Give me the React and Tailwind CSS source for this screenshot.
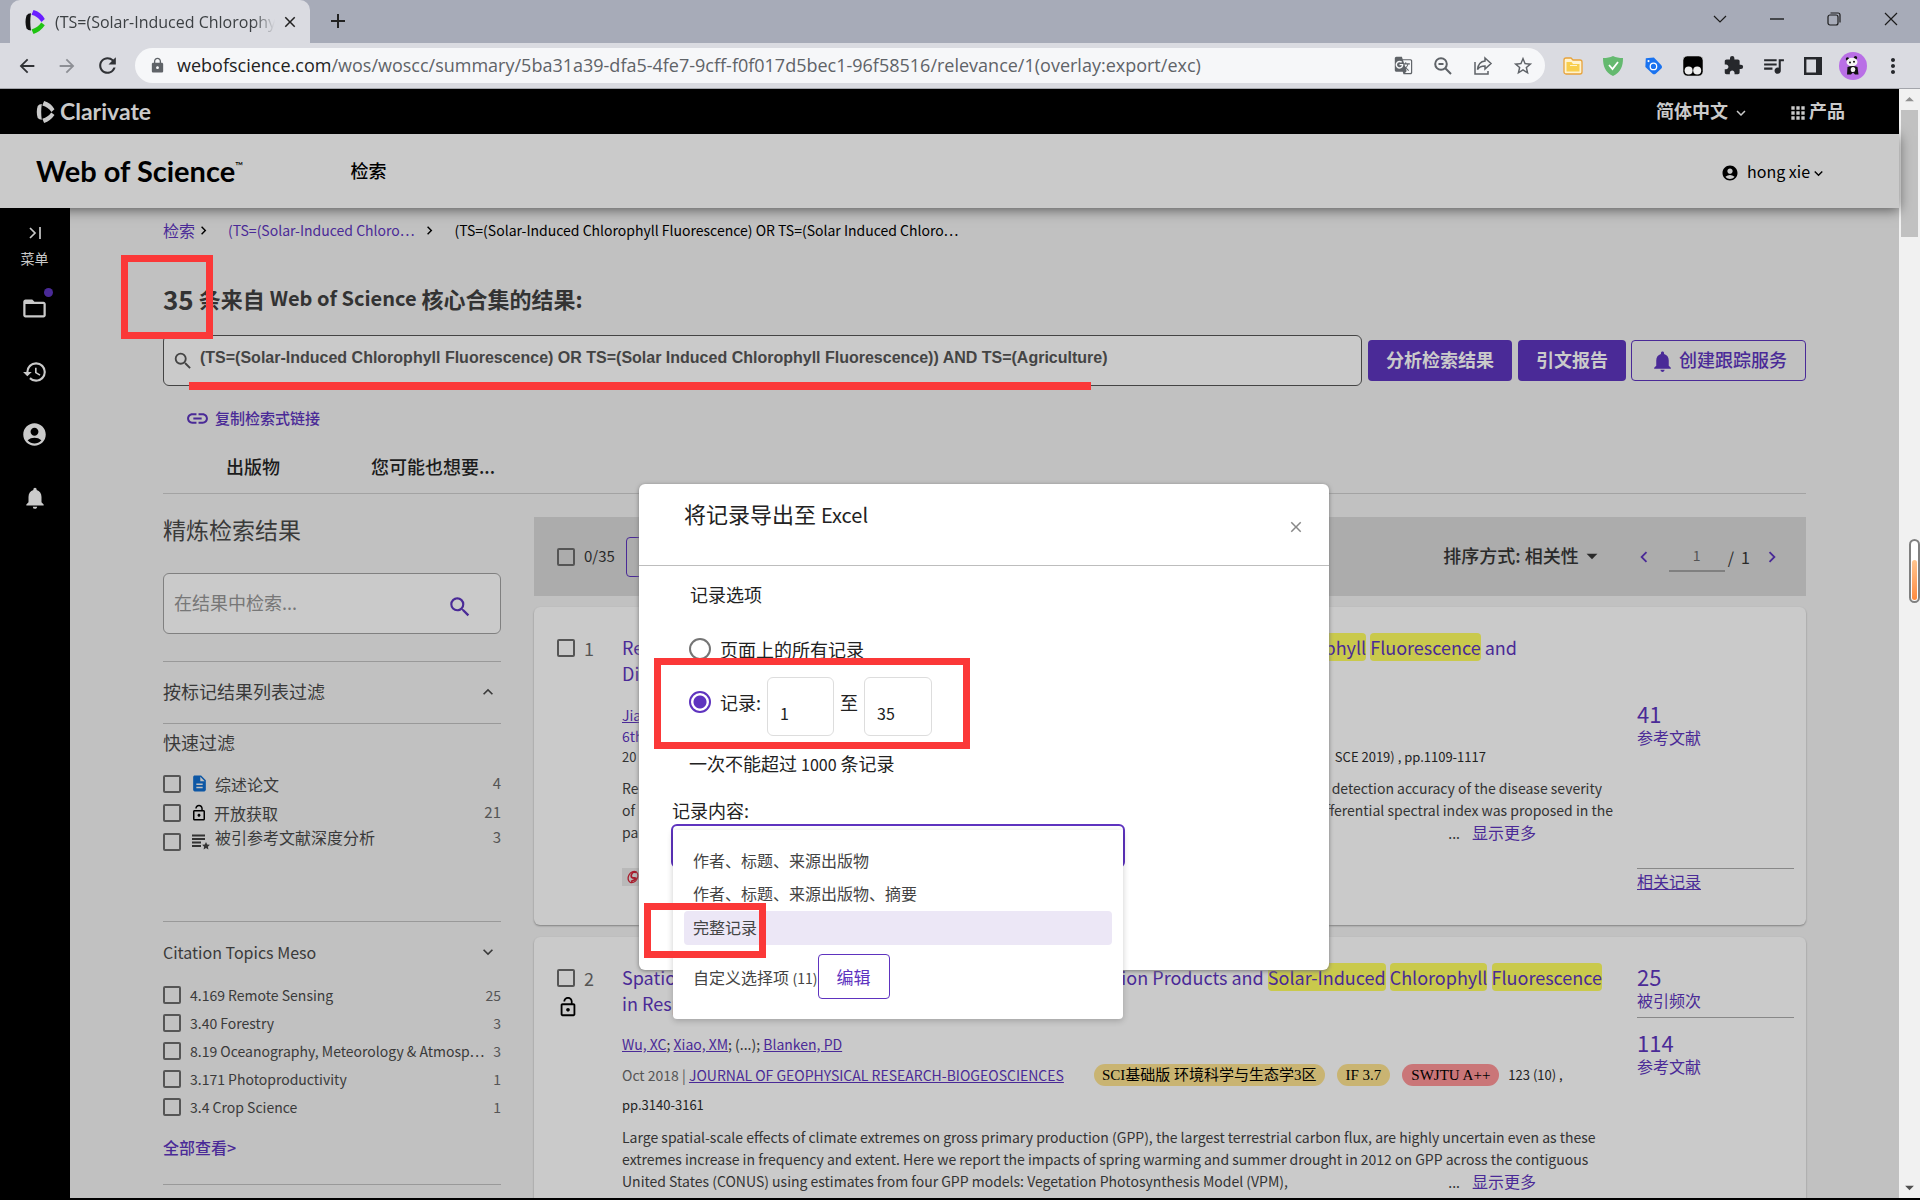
import React from "react";
import {
  MdLock, MdFolderOpen, MdHistory, MdAccountCircle, MdNotifications, MdLink, MdSearch,
  MdLockOpen, MdDescription, MdGTranslate, MdStarBorder, MdExtension, MdQueueMusic,
  MdArrowBack, MdArrowForward, MdRefresh, MdClose, MdAdd, MdMoreVert, MdApps,
  MdKeyboardArrowDown, MdKeyboardArrowUp, MdKeyboardArrowRight, MdKeyboardArrowLeft,
  MdArrowDropDown, MdArrowDropUp,
} from "react-icons/md";

const ring = "appearance-none shrink-0 w-[18px] h-[18px] border-2 border-[#555] rounded-xs";

function Mark({ a, b, c, className }) {
  return (
    <svg viewBox="0 0 20 24" className={className} aria-hidden="true">
      <path d="M1.500 5.500 Q3 3.200 6 3.200 Q4.600 12 6 20.500 Q3 20.500 1.500 18.500 Q-0.500 12 1.500 5.500Z" fill={a} />
      <path d="M8.500 0 Q16 2 19.800 9 L16.500 12 Q13 6.500 6.500 4.800Z" fill={b} />
      <path d="M16.300 12.600 L19.800 15.200 Q15.500 21.500 8.500 24 L6.500 19.400 Q13 17.500 16.300 12.600Z" fill={c} />
    </svg>
  );
}

function IconBtn({ label, children, className = "" }) {
  return (
    <button type="button" aria-label={label} className={`flex items-center justify-center shrink-0 ${className}`}>
      {children}
    </button>
  );
}

function Browser() {
  return (
    <header className="shrink-0 font-['Open_Sans','Noto_Sans',sans-serif]">
      <div className="flex h-[43px] items-stretch bg-[#a7abb8] pl-[10px]">
        <div className="flex w-[300px] items-center rounded-t-[10px] bg-[#dadbe1] pl-[15px] pr-[5px]">
          <Mark a="#111" b="#6a1fff" c="#1fc412" className="h-6 w-5 shrink-0" />
          <div className="ml-[10px] flex-1 overflow-hidden whitespace-nowrap text-[16px] text-[#3c4043] [mask-image:linear-gradient(to_right,black_90%,transparent)]">
            (TS=(Solar-Induced Chlorophy
          </div>
          <IconBtn label="Close tab" className="w-[30px]"><MdClose className="text-[18px] text-[#222]" /></IconBtn>
        </div>
        <IconBtn label="New tab" className="w-[55px] pb-px"><MdAdd className="text-[24px] text-[#222]" /></IconBtn>
        <div className="ml-auto flex items-center pb-[5px] text-[#1c1c1c]">
          <IconBtn label="Search tabs" className="w-[57px]">
            <svg viewBox="0 0 14 8" className="h-2 w-[14px]" fill="none" stroke="currentColor" strokeWidth="1.2"><path d="M1 1l6 6 6-6" /></svg>
          </IconBtn>
          <IconBtn label="Minimize" className="w-[57px]"><svg viewBox="0 0 14 2" className="h-[2px] w-[14px]"><path d="M0 1h14" stroke="currentColor" strokeWidth="1.4" /></svg></IconBtn>
          <IconBtn label="Restore" className="w-[57px]">
            <svg viewBox="0 0 14 14" className="h-[14px] w-[14px]" fill="none" stroke="currentColor" strokeWidth="1.2"><rect x="1" y="3" width="10" height="10" rx="2" /><path d="M3.500 1H11a2 2 0 0 1 2 2v7.500" /></svg>
          </IconBtn>
          <IconBtn label="Close" className="w-[58px]"><svg viewBox="0 0 14 14" className="h-[14px] w-[14px]" fill="none" stroke="currentColor" strokeWidth="1.2"><path d="M1 1l12 12M13 1L1 13" /></svg></IconBtn>
        </div>
      </div>
      <div className="flex h-[46px] items-center border-b border-[#a3a5ab] bg-[#dadbe1] pl-[7px] text-[#303236]">
        <IconBtn label="Back" className="w-10"><MdArrowBack className="text-[22px]" /></IconBtn>
        <IconBtn label="Forward" className="w-10"><MdArrowForward className="text-[22px] text-[#8d8f95]" /></IconBtn>
        <IconBtn label="Reload" className="w-10"><MdRefresh className="text-[25px]" /></IconBtn>
        <div className="ml-2 flex h-[35px] flex-1 items-center rounded-full bg-[#f6f7f9] pl-[14px] pr-[2px] text-[#5f6368]">
          <MdLock className="text-[17px]" />
          <div className="ml-[11px] flex-1 whitespace-nowrap text-[18px]">
            <span className="text-[#222]">webofscience.com</span>/wos/woscc/summary/5ba31a39-dfa5-4fe7-9cff-f0f017d5bec1-96f58516/relevance/1(overlay:export/exc)
          </div>
          <IconBtn label="Translate" className="w-10"><MdGTranslate className="text-[19px]" /></IconBtn>
          <IconBtn label="Zoom" className="w-10">
            <svg viewBox="0 0 20 20" className="h-5 w-5" fill="none" stroke="currentColor" strokeWidth="2"><circle cx="8" cy="8" r="5.800" /><path d="M12.300 12.300L18 18M5.500 8h5" /></svg>
          </IconBtn>
          <IconBtn label="Share" className="w-10">
            <svg viewBox="0 0 20 20" className="h-5 w-5" fill="none" stroke="currentColor" strokeWidth="1.500"><path d="M2 6v12h13v-3M12 2l6 5.500-6 5.500V10c-4 0-6 1-7.500 3.500C5 9 7.500 5.500 12 5z" /></svg>
          </IconBtn>
          <IconBtn label="Bookmark" className="w-10"><MdStarBorder className="text-[22px]" /></IconBtn>
        </div>
        <div className="ml-2 flex items-center pr-[7px] text-[#26282c]">
          <IconBtn label="Folder" className="w-10">
            <svg viewBox="0 0 20 18" className="h-[18px] w-5"><path d="M1 3a2 2 0 0 1 2-2h5l2 2h7a2 2 0 0 1 2 2v10a2 2 0 0 1-2 2H3a2 2 0 0 1-2-2z" fill="#fff3cf" stroke="#e8a33a" strokeWidth="1.300" /><path d="M3.500 5h5l1.500 2h6.500v7.500h-13z" fill="#f8ce4c" /><path d="M7 8.500h7" stroke="#fff3cf" /></svg>
          </IconBtn>
          <IconBtn label="Shield" className="w-10">
            <svg viewBox="0 0 20 20" className="h-5 w-5"><path d="M10 0c3 1.500 6 2 10 2 0 8-2 14-10 18C2 16 0 10 0 2c4 0 7-.5 10-2z" fill="#64b96f" /><path d="M6 9l3.500 4L15 6" fill="none" stroke="#fff" strokeWidth="1.800" /></svg>
          </IconBtn>
          <IconBtn label="Tag" className="w-10">
            <svg viewBox="0 0 20 20" className="h-[18px] w-[18px]"><path d="M2 1.500l9-1 8 8.500q2 2 0 4l-6 5.500q-2 1.500-3.500 0L1.500 11z" fill="#1a73f0" /><circle cx="10.500" cy="10.500" r="3.600" fill="none" stroke="#fff" strokeWidth="1.400" /><circle cx="5" cy="4.500" r="1.200" fill="#fff" /></svg>
          </IconBtn>
          <IconBtn label="Scripts" className="w-10">
            <svg viewBox="0 0 20 20" className="h-5 w-5"><rect width="20" height="20" rx="4.500" fill="#000" stroke="#eee" strokeWidth=".5" /><circle cx="5.600" cy="14.600" r="4" fill="#eee" /><circle cx="14.200" cy="14.600" r="4" fill="#eee" /></svg>
          </IconBtn>
          <IconBtn label="Extensions" className="w-10"><MdExtension className="text-[21px]" /></IconBtn>
          <IconBtn label="Media" className="w-10"><MdQueueMusic className="text-[25px]" /></IconBtn>
          <IconBtn label="Side panel" className="w-10">
            <svg viewBox="0 0 18 18" className="h-[18px] w-[18px]"><path d="M1.200 1.200h15.600v15.600H1.200z" fill="none" stroke="currentColor" strokeWidth="2.400" /><path d="M12 0h6v18h-6z" fill="currentColor" /></svg>
          </IconBtn>
          <IconBtn label="Profile" className="w-10">
            <svg viewBox="0 0 28 28" className="h-7 w-7"><circle cx="14" cy="14" r="14" fill="#b96fe6" /><circle cx="8.500" cy="7" r="1.700" fill="#111" /><circle cx="16.500" cy="5.800" r="1.700" fill="#111" /><ellipse cx="13" cy="10" rx="5.500" ry="4.300" fill="#f4f4f4" /><circle cx="11" cy="10.500" r="1" fill="#111" /><circle cx="15" cy="9.800" r="1" fill="#111" /><path d="M8.500 15q5.500-2 10 0l1 7.500h-3.500l-2-2-2 2H8z" fill="#111" /><ellipse cx="14" cy="17.500" rx="2.300" ry="2.600" fill="#f4f4f4" /></svg>
          </IconBtn>
          <IconBtn label="More" className="w-10"><MdMoreVert className="text-[24px]" /></IconBtn>
        </div>
      </div>
    </header>
  );
}

function Hl({ children }) {
  return <mark className="rounded-[4px] bg-[#c9c94c] py-px text-inherit">{children}</mark>;
}

const topics = [
  ["4.169 Remote Sensing", 25],
  ["3.40 Forestry", 3],
  ["8.19 Oceanography, Meteorology & Atmosp…", 3],
  ["3.171 Photoproductivity", 1],
  ["3.4 Crop Science", 1],
];

function Filters() {
  return (
    <aside className="w-[338px] shrink-0 text-[#3a3a3a]">
      <h2 className="flex h-[79px] items-center pb-2 text-[23px]">精炼检索结果</h2>
      <div className="flex h-[61px] items-center rounded-md border border-[#808080] bg-[#cacaca] pl-[10px] pr-[27px]">
        <input aria-label="在结果中检索" placeholder="在结果中检索..." className="w-full flex-1 bg-transparent pb-0.5 text-[18px] outline-none placeholder:text-[#777]" />
        <IconBtn label="检索"><MdSearch className="mt-1.5 text-[26px] text-[#4a2a97]" /></IconBtn>
      </div>
      <div className="mt-[27px] flex h-[62px] items-center justify-between border-t border-[#999] pb-0.5 pr-[3px] text-[18px]">
        按标记结果列表过滤<MdKeyboardArrowUp className="text-[20px]" />
      </div>
      <h3 className="flex h-[46px] items-center border-t border-[#999] pb-[9px] text-[18px]">快速过滤</h3>
      <ul className="text-[16px]">
        <li><label className="flex h-[29px] items-center"><input type="checkbox" className={ring} /><MdDescription className="ml-[9px] mr-[6px] text-[19px] text-[#0d57a5]" />综述论文<span className="ml-auto text-[15px] text-[#555]">4</span></label></li>
        <li><label className="flex h-[29px] items-center"><input type="checkbox" className={ring} /><MdLockOpen className="ml-[9px] mr-[6px] text-[18px] text-black" />开放获取<span className="ml-auto text-[15px] text-[#555]">21</span></label></li>
        <li><label className="flex h-[30px] items-center"><input type="checkbox" className={ring} />
          <svg viewBox="0 0 18 16" className="ml-[11px] mr-[5px] h-4 w-[18px]" fill="none" stroke="#333" strokeWidth="1.800"><path d="M0 1.500h13M0 5h13M0 8.500h9M0 12h9" /><path d="M14 8l1.200 2.500 2.700.3-2 1.900.5 2.700-2.400-1.300-2.400 1.300.5-2.700-2-1.900 2.700-.3z" fill="#333" stroke="none" /></svg>
          <span className="self-start leading-5">被引参考文献深度分析</span><span className="ml-auto self-start text-[15px] leading-5 text-[#555]">3</span></label></li>
      </ul>
      <div className="mt-16 flex h-[60px] items-center justify-between border-t border-[#999] pr-[3px] text-[16px]">
        Citation Topics Meso<MdKeyboardArrowDown className="text-[20px]" />
      </div>
      <ul className="text-[14px]">
        {topics.map(([t, n]) => (
          <li key={t}>
            <label className="flex h-[28px] items-center">
              <input type="checkbox" className={ring} />
              <span className="ml-[9px] flex-1 whitespace-nowrap">{t}</span>
              <span className="ml-1 text-[#555]">{n}</span>
            </label>
          </li>
        ))}
      </ul>
      <div className="flex h-[64px] items-center border-b border-[#999] pb-3">
        <a href="#all" className="text-[16px] font-medium text-[#4a2a97]">全部查看&gt;</a>
      </div>
    </aside>
  );
}

function Results() {
  return (
    <div className="min-w-0 flex-1 pt-[23px]">
      <div className="flex h-[79px] items-center bg-[#acacac] pl-[23px] pr-[23px] text-[15px] text-[#2a2a2a]">
        <input type="checkbox" id="all" className={ring} />
        <label htmlFor="all" className="ml-[9px]">0/35</label>
        <button type="button" aria-label="添加到标记结果列表" className="ml-[11px] h-10 w-[180px] rounded-[4px] border border-[#4a2a97]" />
        <button type="button" className="ml-auto flex items-center pb-0.5 text-[18px] font-medium">
          排序方式: 相关性<MdArrowDropDown className="text-[26px]" />
        </button>
        <IconBtn label="上一页" className="ml-7"><MdKeyboardArrowLeft className="text-[22px] text-[#4a2a97]" /></IconBtn>
        <input aria-label="页码" defaultValue="1" className="ml-[14px] mr-[3px] w-14 border-b-2 border-[#808080] bg-transparent py-1 text-center text-[14px] text-[#555]" />
        <span className="text-[16px] whitespace-pre">/  1</span>
        <IconBtn label="下一页" className="ml-[11px]"><MdKeyboardArrowRight className="text-[22px] text-[#4a2a97]" /></IconBtn>
      </div>

      <article className="mt-[11px] flex h-[318px] rounded-md bg-[#cacaca] pl-[23px] pr-3 shadow-[0_1px_2px_#808080]">
        <label className="flex w-[65px] items-center self-start pt-[29px] text-[18px] leading-6 text-[#555]">
          <input type="checkbox" className={`${ring} mr-[9px]`} />1
        </label>
        <div className="w-[991px] pt-[27px] text-[14px] text-[#333]">
          <h3 className="text-[18px] leading-[26px] text-[#4a2a97]">
            <div className="flex w-[895px] justify-between"><span>Re</span><span><Hl>Chlorophyll</Hl> <Hl>Fluorescence</Hl> and</span></div>
            <div>Di</div>
          </h3>
          <div className="mt-[18px] leading-[22px]"><a href="#a" className="text-[#4a2a97] underline">Jia</a></div>
          <div className="leading-[20px] text-[#4a2a97]">6th</div>
          <div className="flex w-[864px] justify-between text-[13px] leading-[22px]"><span>20</span><span className="text-[#222]">SCE 2019) , pp.1109-1117</span></div>
          <div className="mt-[9px] leading-[22px]">
            <div className="flex w-[980px] justify-between"><span>Re</span><span>detection accuracy of the disease severity</span></div>
            <div className="flex justify-between"><span>of</span><span>differential spectral index was proposed in the</span></div>
            <div className="flex w-[914px] justify-between"><span>pa</span><span>...<a href="#m" className="ml-3 text-[16px] text-[#4a2a97]">显示更多</a></span></div>
          </div>
          <div className="mt-6 h-[18px] w-5 bg-[#b9b9b9] pl-1 pt-0.5">
            <svg viewBox="0 0 14 14" className="h-[14px] w-[14px]" fill="none" stroke="#a81c2c" strokeWidth="1.800"><path d="M10.500 2.500Q7 1 5.500 4.500T8.500 8 5 11.500" /><ellipse cx="7" cy="7" rx="4.500" ry="6" transform="rotate(30 7 7)" strokeWidth="1.300" /></svg>
          </div>
        </div>
        <div className="ml-auto w-[157px] pt-[92px] text-[#4a2a97]">
          <a href="#r" className="block text-[22px] leading-[28px]">41</a>
          <a href="#r" className="block text-[16px] leading-5">参考文献</a>
          <a href="#s" className="mt-[121px] block border-t border-[#888] pt-0.5 text-[16px] leading-5 underline">相关记录</a>
        </div>
      </article>

      <article className="mt-3 flex h-[318px] rounded-md bg-[#cacaca] pl-[23px] pr-3 shadow-[0_1px_2px_#808080]">
        <div className="w-[65px] pt-[29px]">
          <label className="flex items-center text-[18px] leading-6 text-[#555]"><input type="checkbox" className={`${ring} mr-[9px]`} />2</label>
          <MdLockOpen className="mt-[6px] text-[22px] text-black" />
        </div>
        <div className="w-[991px] pt-[27px] text-[14px] text-[#333]">
          <h3 className="text-[18px] leading-[26px] text-[#4a2a97]">
            <div className="flex w-[980px] justify-between whitespace-nowrap"><span>Spatiotemporal</span><span>Production Products and <Hl>Solar-Induced</Hl> <Hl>Chlorophyll</Hl> <Hl>Fluorescence</Hl></span></div>
            <div>in Response</div>
          </h3>
          <div className="mt-[17px] leading-[22px]">
            <a href="#a" className="text-[#4a2a97] underline">Wu, XC</a>; <a href="#a" className="text-[#4a2a97] underline">Xiao, XM</a>; (...); <a href="#a" className="text-[#4a2a97] underline">Blanken, PD</a>
          </div>
          <div className="mt-2 flex items-center leading-[24px] text-[#555]">
            <span className="whitespace-pre">Oct 2018 | </span><a href="#j" className="text-[#4a2a97] underline">JOURNAL OF GEOPHYSICAL RESEARCH-BIOGEOSCIENCES</a>
            <div className="ml-[30px] flex gap-3 font-['Liberation_Serif','Noto_Sans_CJK_SC',serif] text-[15px] leading-[22px] text-black">
              <span className="rounded-full bg-[#c9b472] px-[8px]">SCI基础版 环境科学与生态学3区</span>
              <span className="rounded-full bg-[#c9b472] px-[9px]">IF 3.7</span>
              <span className="rounded-full bg-[#ca7678] px-[9px]">SWJTU A++</span>
            </div>
            <span className="ml-[9px] text-[13px] text-[#222]">123 (10) ,</span>
          </div>
          <div className="mt-[7px] text-[13px] leading-[22px] text-[#222]">pp.3140-3161</div>
          <div className="mt-[10px] whitespace-nowrap leading-[22px]">
            <div>Large spatial-scale effects of climate extremes on gross primary production (GPP), the largest terrestrial carbon flux, are highly uncertain even as these</div>
            <div>extremes increase in frequency and extent. Here we report the impacts of spring warming and summer drought in 2012 on GPP across the contiguous</div>
            <div className="flex w-[914px] justify-between"><span>United States (CONUS) using estimates from four GPP models: Vegetation Photosynthesis Model (VPM),</span><span>...<a href="#m" className="ml-3 text-[16px] text-[#4a2a97]">显示更多</a></span></div>
          </div>
        </div>
        <div className="ml-auto w-[157px] pt-[25px] text-[#4a2a97]">
          <a href="#c" className="block text-[22px] leading-[28px]">25</a>
          <a href="#c" className="block text-[16px] leading-5">被引频次</a>
          <a href="#r" className="mt-[7px] block border-t border-[#888] pt-[10px] text-[22px] leading-[28px]">114</a>
          <a href="#r" className="block text-[16px] leading-5">参考文献</a>
        </div>
      </article>
    </div>
  );
}

function Dialog() {
  const radio = "appearance-none w-[22px] h-[22px] rounded-full border-2 shrink-0";
  return (
    <div role="dialog" aria-label="将记录导出至 Excel" className="absolute left-[639px] top-[395px] h-[486px] w-[690px] rounded-md bg-white text-[18px] text-[#222] shadow-[0_1px_4px_#777]">
      <div className="flex h-[82px] items-center justify-between border-b border-[#bdbdbd] pl-[45px] pr-6">
        <h2 className="pb-[22px] text-[22px]">将记录导出至 <span className="text-[20px]">Excel</span></h2>
        <IconBtn label="关闭" className="pt-1"><MdClose className="text-[18px] text-[#888]" /></IconBtn>
      </div>
      <div className="pl-[50px] pt-[14px]">
        <div className="pl-px leading-[28px]">记录选项</div>
        <label className="mt-6 flex h-[34px] items-center gap-[9px]"><input type="radio" name="range" className={`${radio} border-[#757575]`} />页面上的所有记录</label>
        <div className="mt-[10px] flex h-[60px] items-center">
          <div className="flex items-center pb-2">
            <input id="rng" type="radio" name="range" defaultChecked className={`${radio} border-[#5e33bf] bg-[radial-gradient(circle,#5e33bf_6px,transparent_7px)] bg-center`} />
            <label htmlFor="rng" className="ml-[9px]">记录:</label>
          </div>
          <input aria-label="起始记录" defaultValue="1" className="ml-[6px] h-[59px] w-[67px] rounded-md border border-[#ddd] pl-[12px] pt-[13px] text-[16px]" />
          <span className="mx-[6px] pb-2">至</span>
          <input aria-label="结束记录" defaultValue="35" className="h-[59px] w-[68px] rounded-md border border-[#ddd] pl-[12px] pt-[13px] text-[16px]" />
        </div>
        <div className="mt-[13px] leading-[28px]">一次不能超过 <span className="text-[16px]">1000</span> 条记录</div>
      </div>
      <div className="relative pl-[32px] pt-[18px]">
        <div className="pl-px leading-[28px]">记录内容:</div>
        <button type="button" aria-label="记录内容" className="block h-11 w-[454px] rounded-md border-2 border-[#5e33bf]" />
        <div role="listbox" aria-label="记录内容选项" className="absolute left-[34px] top-[52px] h-[189px] w-[450px] rounded-b-[4px] bg-white px-[11px] pt-[14px] text-[16px] text-[#444] shadow-[0_2px_6px_#0003]">
          <div role="option" className="flex h-[33px] items-center pb-0.5 pl-[9px]">作者、标题、来源出版物</div>
          <div role="option" className="flex h-[34px] items-center pb-0.5 pl-[9px]">作者、标题、来源出版物、摘要</div>
          <div role="option" aria-selected="true" className="flex h-[34px] items-center rounded-[4px] bg-[#ece7f6] pb-0.5 pl-[9px]">完整记录</div>
          <div className="mt-[9px] flex h-[45px] items-center pl-[9px]">
            <span>自定义选择项 <span className="text-[14px]">(11)</span></span>
            <button type="button" className="h-[45px] w-[72px] rounded-[4px] border border-[#5e33bf] text-[17px] text-[#5e33bf]">编辑</button>
          </div>
        </div>
      </div>
    </div>
  );
}

export default function App() {
  return (
    <div className="flex h-screen flex-col overflow-hidden border-b-2 border-black bg-[#c1c1c1] font-['Noto_Sans_CJK_SC',sans-serif]">
      <Browser />
      <div className="relative flex min-h-0 flex-1">
        <div className="flex min-w-0 flex-1 flex-col">
          <div className="flex h-[45px] shrink-0 items-center bg-black pl-9 pr-[54px] text-[#cacaca]">
            <Mark a="currentColor" b="currentColor" c="currentColor" className="h-[22px] w-[19px]" />
            <span className="ml-[5px] font-['Lato',sans-serif] text-[23px] font-bold">Clarivate</span>
            <button type="button" className="ml-auto flex items-center pb-0.5 text-[18px] font-bold">简体中文<MdKeyboardArrowDown className="ml-1 mt-1 text-[18px]" /></button>
            <button type="button" className="ml-[38px] flex items-center pb-0.5 text-[18px] font-bold"><MdApps className="mr-px mt-1 text-[20px]" />产品</button>
          </div>
          <div className="relative z-10 flex h-[74px] shrink-0 items-center bg-[#cacaca] pl-9 pr-[72px] text-black shadow-[0_2px_12px_#0008]">
            <span className="font-['Lato',sans-serif] text-[29px] font-bold">Web of Science<sup className="text-[11px] -top-3 font-normal">™</sup></span>
            <a href="#search" className="ml-[107px] pb-0.5 text-[18px] font-medium">检索</a>
            <button type="button" className="ml-auto flex items-center text-[16px]"><MdAccountCircle className="mr-2 mt-1 text-[18px]" />hong xie<MdKeyboardArrowDown className="mt-1 text-[17px]" /></button>
          </div>
          <div className="flex min-h-0 flex-1">
            <nav className="flex w-[70px] shrink-0 flex-col items-center bg-black pr-px pt-[19px] text-[#cacaca]">
              <svg viewBox="0 0 12 12" className="h-3 w-3" fill="none" stroke="currentColor" strokeWidth="1.700"><path d="M1 1l5 5-5 5M11 0v12" /></svg>
              <span className="mt-[7px] text-[14px] leading-6">菜单</span>
              <button type="button" aria-label="文件夹" className="relative mt-[25px]"><MdFolderOpen className="text-[27px]" /><span className="absolute -right-[5px] -top-[7px] h-[9px] w-[9px] rounded-full bg-[#4a2a97]" /></button>
              <IconBtn label="历史" className="mt-[37px]"><MdHistory className="text-[26px]" /></IconBtn>
              <IconBtn label="账户" className="mt-[36px]"><MdAccountCircle className="text-[27px]" /></IconBtn>
              <IconBtn label="通知" className="mt-[37px]"><MdNotifications className="text-[26px]" /></IconBtn>
            </nav>
            <main className="min-w-0 flex-1 overflow-hidden px-[93px]">
              <div className="flex h-[46px] items-center whitespace-nowrap pb-0.5 text-[14px] text-[#4a2a97]">
                <a href="#s" className="text-[16px]">检索</a><MdKeyboardArrowRight className="mr-4 text-[17px] text-black" />
                <a href="#q">(TS=(Solar-Induced Chloro…</a><MdKeyboardArrowRight className="ml-[7px] mr-4 text-[17px] text-black" />
                <span className="text-black">(TS=(Solar-Induced Chlorophyll Fluorescence) OR TS=(Solar Induced Chloro…</span>
              </div>
              <h1 className="flex h-[81px] items-center pt-[7px] text-[22px] font-bold text-[#333]">
                <span className="mr-[5px] text-[26px]">35</span>条来自<span className="mx-[5px] text-[20px]">Web of Science</span>核心合集的结果:
              </h1>
              <div className="flex h-[51px] items-center">
                <label className="mr-[6px] flex h-[51px] flex-1 items-center rounded-md border border-[#444] bg-[#cacaca] pl-[8px]">
                  <MdSearch className="text-[22px] text-[#444]" />
                  <input aria-label="检索式" defaultValue="(TS=(Solar-Induced Chlorophyll Fluorescence) OR TS=(Solar Induced Chlorophyll Fluorescence)) AND TS=(Agriculture)" className="ml-[6px] w-full flex-1 bg-transparent pb-[6px] font-['Liberation_Sans',sans-serif] text-[16px] font-bold text-[#444] outline-none" />
                </label>
                <button type="button" className="h-[41px] w-[144px] rounded-[4px] bg-[#4a2a97] pb-0.5 text-[18px] font-bold text-[#cacaca]">分析检索结果</button>
                <button type="button" className="ml-[6px] h-[41px] w-[108px] rounded-[4px] bg-[#4a2a97] pb-0.5 text-[18px] font-bold text-[#cacaca]">引文报告</button>
                <button type="button" className="ml-[5px] flex h-[41px] w-[175px] items-center justify-center rounded-[4px] border border-[#4a2a97] pb-0.5 text-[18px] font-medium text-[#4a2a97]"><MdNotifications className="mr-1 mt-1 text-[25px]" />创建跟踪服务</button>
              </div>
              <div className="flex h-[66px] items-center pl-[22px]">
                <button type="button" className="flex items-center pb-px text-[15px] font-medium text-[#4a2a97]"><MdLink className="mr-[5px] text-[25px]" />复制检索式链接</button>
              </div>
              <div className="flex h-[42px] items-center border-b border-[#a3a3a3] pb-[13px] pl-[63px] text-[18px] font-medium text-[#1c1c1c]">
                <button type="button">出版物</button><button type="button" className="ml-[91px]">您可能也想要...</button>
              </div>
              <div className="flex gap-[33px]">
                <Filters />
                <Results />
              </div>
            </main>
          </div>
        </div>
        <div className="relative flex w-[21px] shrink-0 flex-col bg-[#f1f1f1]">
          <MdArrowDropUp className="h-[21px] w-[21px] text-[#909090]" />
          <div className="mx-[2px] h-[127px] bg-[#c1c1c1]" />
          <MdArrowDropDown className="mt-auto h-[21px] w-[21px] text-[#505050]" />
          <div className="absolute left-[10px] top-[450px] flex h-[64px] w-[11px] items-end rounded-full border-2 border-[#808080] bg-white p-px">
            <div className="h-[40px] w-full rounded-full bg-linear-to-b from-[#ffc58f] to-[#ff8a3d]" />
          </div>
        </div>
        <Dialog />
        <div className="absolute left-[121px] top-[166px] h-[84px] w-[92px] border-[7px] border-[#fb3838]" />
        <div className="absolute left-[189px] top-[293px] h-[8px] w-[902px] bg-[#fb3838]" />
        <div className="absolute left-[654px] top-[569px] h-[91px] w-[316px] border-[7px] border-[#fb3838]" />
        <div className="absolute left-[644px] top-[814px] h-[55px] w-[122px] border-[7px] border-[#fb3838]" />
      </div>
    </div>
  );
}
